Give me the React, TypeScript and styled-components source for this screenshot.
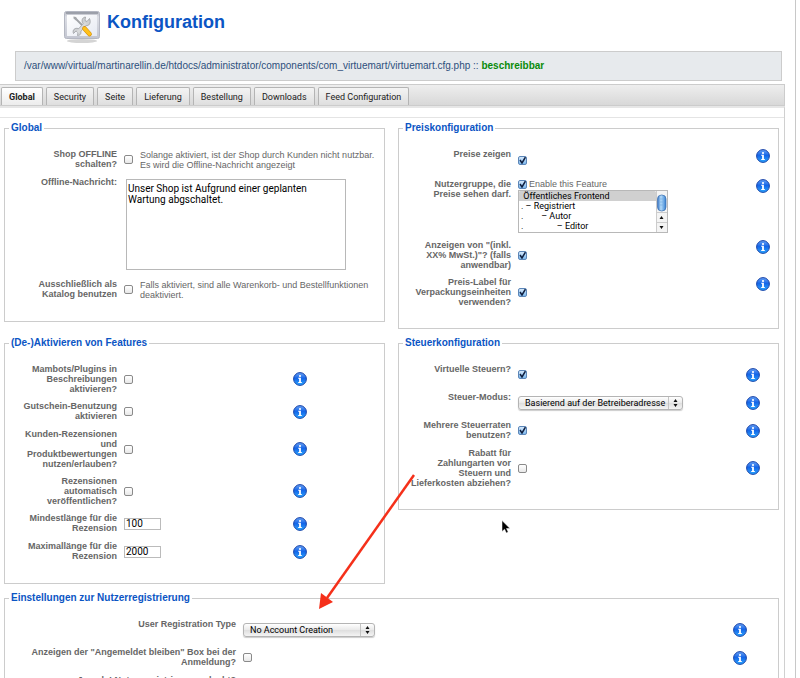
import React, { useId } from "react";
import styled, { createGlobalStyle } from "styled-components";

const SANS = '"Liberation Sans", Arial, Helvetica, sans-serif';
const UI = 'Roboto, "Lucida Grande", Tahoma, sans-serif';

const GlobalStyle = createGlobalStyle`
  *, *::before, *::after { box-sizing: border-box; }
  html { scrollbar-width: none; background: #fff; }
  body { margin: 0; font: 9px/10px ${SANS}; color: #666; }
`;

const Page = styled.div`
  position: relative;
  margin-right: 4px;
  padding-right: 10px;
  border-right: 1px solid #c8c8c8;
`;

const Header = styled.header`
  display: flex;
  gap: 7px;
  height: 51px;
  padding: 9px 0 0 63px;
`;

const Title = styled.h1`
  margin: 0;
  font: bold 18px/26px ${SANS};
  color: #0b55c4;
`;

const PathBar = styled.div`
  margin: 0 3px 3px 15px;
  padding: 8px;
  border: 1px solid #ccc;
  background: #e7eaed;
  font-size: 10px;
  line-height: 12px;
  color: #2d4f7c;
  white-space: nowrap;
`;

const Writable = styled.strong`
  color: #0a8a0a;
`;

const TabBar = styled.nav`
  display: flex;
  align-items: flex-end;
  gap: 3px;
  height: 22px;
  padding: 0 1px;
  border: 1px solid #ccc;
  border-left: 0;
  background: linear-gradient(#eeeeee, #d8d8d8);
`;

const Tab = styled.button<{ $active?: boolean }>`
  height: 18px;
  padding: 0 7px;
  border: 1px solid #b4b4b4;
  border-bottom: 0;
  border-radius: 2px 2px 0 0;
  background: ${(p) => (p.$active ? "linear-gradient(#fff, #ececec)" : "linear-gradient(#f4f4f4, #dedede)")};
  font: ${(p) => (p.$active ? "bold" : "normal")} 9px/16px ${UI};
  color: #222;
  white-space: nowrap;
`;

const TabPage = styled.main`
  border-right: 1px solid #d0d0d0;
  border-top: 2px solid #e6e6e6;
`;

const Spacer = styled.div`
  height: 10px;
  border-bottom: 1px solid #e4e4e4;
`;

const Panels = styled.div`
  display: grid;
  grid-template-columns: 1fr 1fr;
  align-items: start;
  gap: 8px 13px;
  padding: 4px 5px 0 4px;
`;

const Panel = styled.fieldset<{ $wide?: boolean }>`
  grid-column: ${(p) => (p.$wide ? "1 / -1" : "auto")};
  min-width: 0;
  margin: 0;
  padding: 11px 0 18px;
  border: 1px solid #ccc;
`;

const Legend = styled.legend`
  margin-left: 4px;
  padding: 0 2px;
  font: bold 10px/12px ${SANS};
  color: #0b55c4;
`;

const Row = styled.div<{ $label: number; $info: number; $height: number }>`
  display: grid;
  grid-template-columns: ${(p) => p.$label}px minmax(0, 1fr) ${(p) => p.$info}px;
  column-gap: 7px;
  min-height: ${(p) => p.$height}px;
  padding: 4px 0 3px;
`;

const RowLabel = styled.label`
  font-weight: bold;
  text-align: right;
  white-space: pre;
  justify-self: end;
`;

const Control = styled.div`
  display: flex;
  align-items: center;
`;

const GroupControl = styled.div`
  display: flex;
  flex-direction: column;
  gap: 1px;
`;

const FeatureLabel = styled.label`
  display: flex;
  align-items: center;
  gap: 2px;
`;

const Help = styled.span`
  margin-left: 7px;
  white-space: pre;
`;

const InfoButton = styled.button<{ $top?: boolean }>`
  align-self: ${(p) => (p.$top ? "start" : "center")};
  width: 14px;
  height: 14px;
  padding: 0;
  border: 0;
  background: none;
  svg { display: block; }
`;

const Check = styled.input`
  appearance: none;
  flex: none;
  width: 9px;
  height: 9px;
  margin: 0;
  border: 1px solid #8a8a8a;
  border-radius: 2px;
  background: linear-gradient(#fff, #e8e8e8);
  &:checked {
    border-color: #5c86b8;
    background: url("data:image/svg+xml,%3Csvg xmlns='http://www.w3.org/2000/svg' viewBox='0 0 7 7'%3E%3Cpath d='M1 3l2 3L6.500 0' fill='none' stroke='%23102040' stroke-width='1.500'/%3E%3C/svg%3E") center / 7px 7px no-repeat,
      linear-gradient(#d4e8fb, #7db9ee);
  }
`;

const Area = styled.textarea`
  display: block;
  width: 220px;
  height: 91px;
  margin: 2px;
  padding: 3px 1px;
  border: 1px solid #b8b8b8;
  background: #fff;
  font: 10px/11px ${UI};
  color: #000;
  resize: none;
`;

const TextBox = styled.input`
  width: 37px;
  height: 12px;
  padding: 0 1px;
  border: 1px solid #bbb;
  font: 10px/10px ${UI};
  color: #000;
`;

const SelectShell = styled.span<{ $width: number }>`
  display: flex;
  position: relative;
  width: ${(p) => p.$width}px;
  svg { position: absolute; right: 0; top: 0; pointer-events: none; }
`;

const Select = styled.select`
  appearance: none;
  width: 100%;
  height: 14px;
  padding: 0 16px 0 6px;
  border: 1px solid #b4b4b4;
  border-radius: 3px;
  background: linear-gradient(#fff, #e9e9e9 50%, #dedede 51%, #f4f4f4);
  box-shadow: 0 1px 1px #ccc;
  font: 9px/12px ${UI};
  color: #000;
`;

const GroupBox = styled.div`
  display: flex;
  width: 150px;
  height: 43px;
  border: 1px solid #b8b8b8;
  svg { flex: none; }
`;

const GroupList = styled.select`
  appearance: none;
  flex: 1;
  min-width: 0;
  height: 41px;
  padding: 0;
  border: 0;
  overflow: hidden;
  scrollbar-width: none;
  background: #fff;
  font: 9px/10px ${UI};
  color: #000;
  option {
    min-height: 0;
    height: 10px;
    padding: 0 2px;
    line-height: 10px;
    white-space: pre;
  }
  option:checked { background: #d0d0d0 linear-gradient(#d0d0d0, #d0d0d0); color: #000; }
`;

const Arrow = styled.svg`
  position: absolute;
  left: 316px;
  top: 470px;
  pointer-events: none;
`;

const Pointer = styled.svg`
  position: absolute;
  left: 501px;
  top: 520px;
  pointer-events: none;
`;

function ConfigIcon() {
  return (
    <svg width="37" height="35" viewBox="0 0 37 35" aria-hidden="true">
      <defs>
        <linearGradient id="cfgFrame" x1="0" y1="0" x2="0" y2="1">
          <stop offset="0" stopColor="#b4b7c0" />
          <stop offset="0.2" stopColor="#dcdee5" />
          <stop offset="1" stopColor="#c3c6d1" />
        </linearGradient>
        <linearGradient id="cfgPane" x1="0" y1="0" x2="1" y2="1">
          <stop offset="0" stopColor="#ffffff" />
          <stop offset="1" stopColor="#e6eaf2" />
        </linearGradient>
      </defs>
      <ellipse cx="19" cy="32" rx="15" ry="2" fill="#d4d4d4" />
      <rect x="1.500" y="2.500" width="35" height="27" rx="2" fill="url(#cfgFrame)" stroke="#b4b7c2" />
      <path d="M3 4h32" stroke="#90949f" strokeWidth="1.500" />
      <rect x="4" y="6" width="30" height="21" fill="url(#cfgPane)" />
      <path d="M12.500 9.500L21 18" stroke="#9fa2a6" strokeWidth="1.800" />
      <path d="M10.500 7.500l2.500.5 1.500 2.500-1.500 1-2.500-2z" fill="#a5a8ac" />
      <path d="M14.500 23.500L23 14" stroke="#999ca0" strokeWidth="4" />
      <path
        d="M26.500 9.500l-2.500 3-2-1 .5-3.500c-4 .5-4 4.500-2.500 6.500l2.500 2c3.500 1 6-2.500 4-7zM10.500 24.500l2.500-2.500 2 1.500-.5 3c3.500 0 4-3 3-5l-2.500-2c-3-1-6 1.500-4.500 5z"
        fill="#cfd1d3"
        stroke="#94979b"
        strokeWidth=".7"
      />
      <path d="M14.500 23.500L23 14" stroke="#d8dadb" strokeWidth="2.800" />
      <path d="M21.500 19.500l5 5.500" stroke="#d08a08" strokeWidth="4.600" strokeLinecap="round" />
      <path d="M21.500 19.500l5 5.500" stroke="#ffc11c" strokeWidth="3.400" strokeLinecap="round" />
    </svg>
  );
}

function Info({ top }: { top?: boolean }) {
  return (
    <InfoButton type="button" $top={top} aria-label="Info">
      <svg width="14" height="14" viewBox="0 0 14 14" aria-hidden="true">
        <defs>
          <linearGradient id="infoFill" x1="0" y1="0" x2="0" y2="1">
            <stop offset="0" stopColor="#6aa2f4" />
            <stop offset="0.45" stopColor="#1465e8" />
            <stop offset="1" stopColor="#2ba6ff" />
          </linearGradient>
        </defs>
        <circle cx="7" cy="7" r="6.400" fill="url(#infoFill)" stroke="#1a44a8" strokeWidth="1" />
        <circle cx="7" cy="4" r="1.100" fill="#fff" />
        <path d="M5.200 5.800h2.700v4.200h.9v1H5.200v-1h.9V6.800h-.9z" fill="#fff" />
      </svg>
    </InfoButton>
  );
}

function Dropdown({ id, width, value }: { id: string; width: number; value: string }) {
  return (
    <SelectShell $width={width}>
      <Select id={id} defaultValue={value}>
        <option>{value}</option>
      </Select>
      <svg width="15" height="14" viewBox="0 0 15 14" aria-hidden="true">
        <path d="M.5 1v12" stroke="#c4c4c4" />
        <path d="M5.500 6l2-3 2 3zM5.500 8l2 3 2-3z" fill="#111" />
      </svg>
    </SelectShell>
  );
}

function ScrollStrip() {
  return (
    <svg width="11" height="41" viewBox="0 0 11 41" aria-hidden="true">
      <defs>
        <linearGradient id="thumb">
          <stop offset="0" stopColor="#2f6fc4" />
          <stop offset="0.4" stopColor="#b5dcfa" />
          <stop offset="1" stopColor="#3580d2" />
        </linearGradient>
      </defs>
      <rect width="11" height="41" fill="#f4f4f4" />
      <path d="M.5 0v41M0 21.500h11M0 31.500h11" stroke="#ccc" />
      <rect x="1.500" y="4" width="8.500" height="16" rx="4" fill="url(#thumb)" stroke="#3c6fae" strokeWidth=".7" />
      <path d="M3 8h5M3 11h5M3 14h5" stroke="#78b0e4" strokeWidth=".7" />
      <path d="M3.500 28l2-3 2 3zM3.500 35l2 3 2-3z" fill="#111" />
    </svg>
  );
}

type FieldProps = {
  label: string;
  labelWidth?: number;
  infoWidth?: number;
  height?: number;
  info?: boolean;
  infoTop?: boolean;
  children: (id: string) => React.ReactNode;
};

function Field({ label, labelWidth = 112, infoWidth = 0, height = 28, info = true, infoTop, children }: FieldProps) {
  const id = useId();
  return (
    <Row $label={labelWidth} $info={infoWidth} $height={height}>
      <RowLabel htmlFor={id}>{label}</RowLabel>
      {children(id)}
      {info && <Info top={infoTop} />}
    </Row>
  );
}

type CheckFieldProps = Omit<FieldProps, "children"> & { checked?: boolean; help?: string };

function CheckField({ checked, help, ...rest }: CheckFieldProps) {
  return (
    <Field {...rest}>
      {(id) => (
        <Control>
          <Check type="checkbox" id={id} defaultChecked={checked} />
          {help && <Help>{help}</Help>}
        </Control>
      )}
    </Field>
  );
}

const TABS = ["Global", "Security", "Seite", "Lieferung", "Bestellung", "Downloads", "Feed Configuration"];

const FEATURES = [
  "Mambots/Plugins in\nBeschreibungen\naktivieren?",
  "Gutschein-Benutzung\naktivieren",
  "Kunden-Rezensionen\nund\nProduktbewertungen\nnutzen/erlauben?",
  "Rezensionen\nautomatisch\nveröffentlichen?",
];

const LENGTHS = [
  { label: "Mindestlänge für die\nRezension", value: "100" },
  { label: "Maximallänge für die\nRezension", value: "2000" },
];

const indent = (n: number) => "\u00a0".repeat(n);

export default function App() {
  return (
    <>
      <GlobalStyle />
      <Page>
        <Header>
          <ConfigIcon />
          <Title>Konfiguration</Title>
        </Header>
        <PathBar>
          /var/www/virtual/martinarellin.de/htdocs/administrator/components/com_virtuemart/virtuemart.cfg.php ::{" "}
          <Writable>beschreibbar</Writable>
        </PathBar>
        <TabBar>
          {TABS.map((tab, i) => (
            <Tab key={tab} type="button" $active={i === 0}>{tab}</Tab>
          ))}
        </TabBar>
        <TabPage>
          <Spacer />
          <Panels>
            <Panel>
              <Legend>Global</Legend>
              <CheckField
                label={"Shop OFFLINE\nschalten?"}
                info={false}
                help={"Solange aktiviert, ist der Shop durch Kunden nicht nutzbar.\nEs wird die Offline-Nachricht angezeigt"}
              />
              <Field label="Offline-Nachricht:" info={false}>
                {(id) => (
                  <Control>
                    <Area id={id} defaultValue={"Unser Shop ist Aufgrund einer geplanten\nWartung abgschaltet."} />
                  </Control>
                )}
              </Field>
              <CheckField
                label={"Ausschließlich als\nKatalog benutzen"}
                info={false}
                help={"Falls aktiviert, sind alle Warenkorb- und Bestellfunktionen\ndeaktiviert."}
              />
            </Panel>

            <Panel>
              <Legend>Preiskonfiguration</Legend>
              <CheckField label="Preise zeigen" infoWidth={22} height={30} infoTop checked />
              <Field label={"Nutzergruppe, die\nPreise sehen darf."} infoWidth={22} height={61} infoTop>
                {(id) => (
                  <GroupControl>
                    <FeatureLabel>
                      <Check type="checkbox" defaultChecked />
                      Enable this Feature
                    </FeatureLabel>
                    <GroupBox>
                      <GroupList id={id} size={4} defaultValue="public">
                        <option value="public">{indent(1) + "Öffentliches Frontend"}</option>
                        <option value="registered">{". – Registriert"}</option>
                        <option value="author">{"." + indent(8) + "– Autor"}</option>
                        <option value="editor">{"." + indent(15) + "– Editor"}</option>
                      </GroupList>
                      <ScrollStrip />
                    </GroupBox>
                  </GroupControl>
                )}
              </Field>
              <CheckField label={'Anzeigen von "(inkl.\nXX% MwSt.)"? (falls\nanwendbar)'} infoWidth={22} infoTop checked />
              <CheckField label={"Preis-Label für\nVerpackungseinheiten\nverwenden?"} infoWidth={22} infoTop checked />
            </Panel>

            <Panel>
              <Legend>(De-)Aktivieren von Features</Legend>
              {FEATURES.map((label) => (
                <CheckField key={label} label={label} infoWidth={91} />
              ))}
              {LENGTHS.map(({ label, value }) => (
                <Field key={label} label={label} infoWidth={91}>
                  {(id) => (
                    <Control>
                      <TextBox type="text" id={id} defaultValue={value} />
                    </Control>
                  )}
                </Field>
              ))}
            </Panel>

            <Panel>
              <Legend>Steuerkonfiguration</Legend>
              <CheckField label="Virtuelle Steuern?" infoWidth={32} checked />
              <Field label="Steuer-Modus:" infoWidth={32}>
                {(id) => (
                  <Control>
                    <Dropdown id={id} width={165} value="Basierend auf der Betreiberadresse" />
                  </Control>
                )}
              </Field>
              <CheckField label={"Mehrere Steuerraten\nbenutzen?"} infoWidth={32} checked />
              <CheckField label={"Rabatt für\nZahlungarten vor\nSteuern und\nLieferkosten abziehen?"} infoWidth={32} />
            </Panel>

            <Panel $wide>
              <Legend>Einstellungen zur Nutzerregistrierung</Legend>
              <Field label="User Registration Type" labelWidth={231} infoWidth={45}>
                {(id) => (
                  <Control>
                    <Dropdown id={id} width={132} value="No Account Creation" />
                  </Control>
                )}
              </Field>
              <CheckField label={'Anzeigen der "Angemeldet bleiben" Box bei der\nAnmeldung?'} labelWidth={231} infoWidth={45} />
              <Field label="Joomla! Nutzerregistrierung erlaubt?" labelWidth={231} infoWidth={45} info={false}>
                {() => null}
              </Field>
            </Panel>
          </Panels>
        </TabPage>

        <Arrow width="102" height="142" viewBox="0 0 102 142" aria-hidden="true">
          <path d="M98 5L11 128" stroke="#f5301a" strokeWidth="2.500" />
          <path d="M3 139L5 123L17 132z" fill="#f5301a" />
        </Arrow>
        <Pointer width="10" height="14" viewBox="0 0 10 14" aria-hidden="true">
          <path d="M1 .5v11l2.600-2.300L5.300 13l1.900-.9-1.700-3.600H9z" fill="#000" stroke="#fff" strokeWidth=".5" />
        </Pointer>
      </Page>
    </>
  );
}
